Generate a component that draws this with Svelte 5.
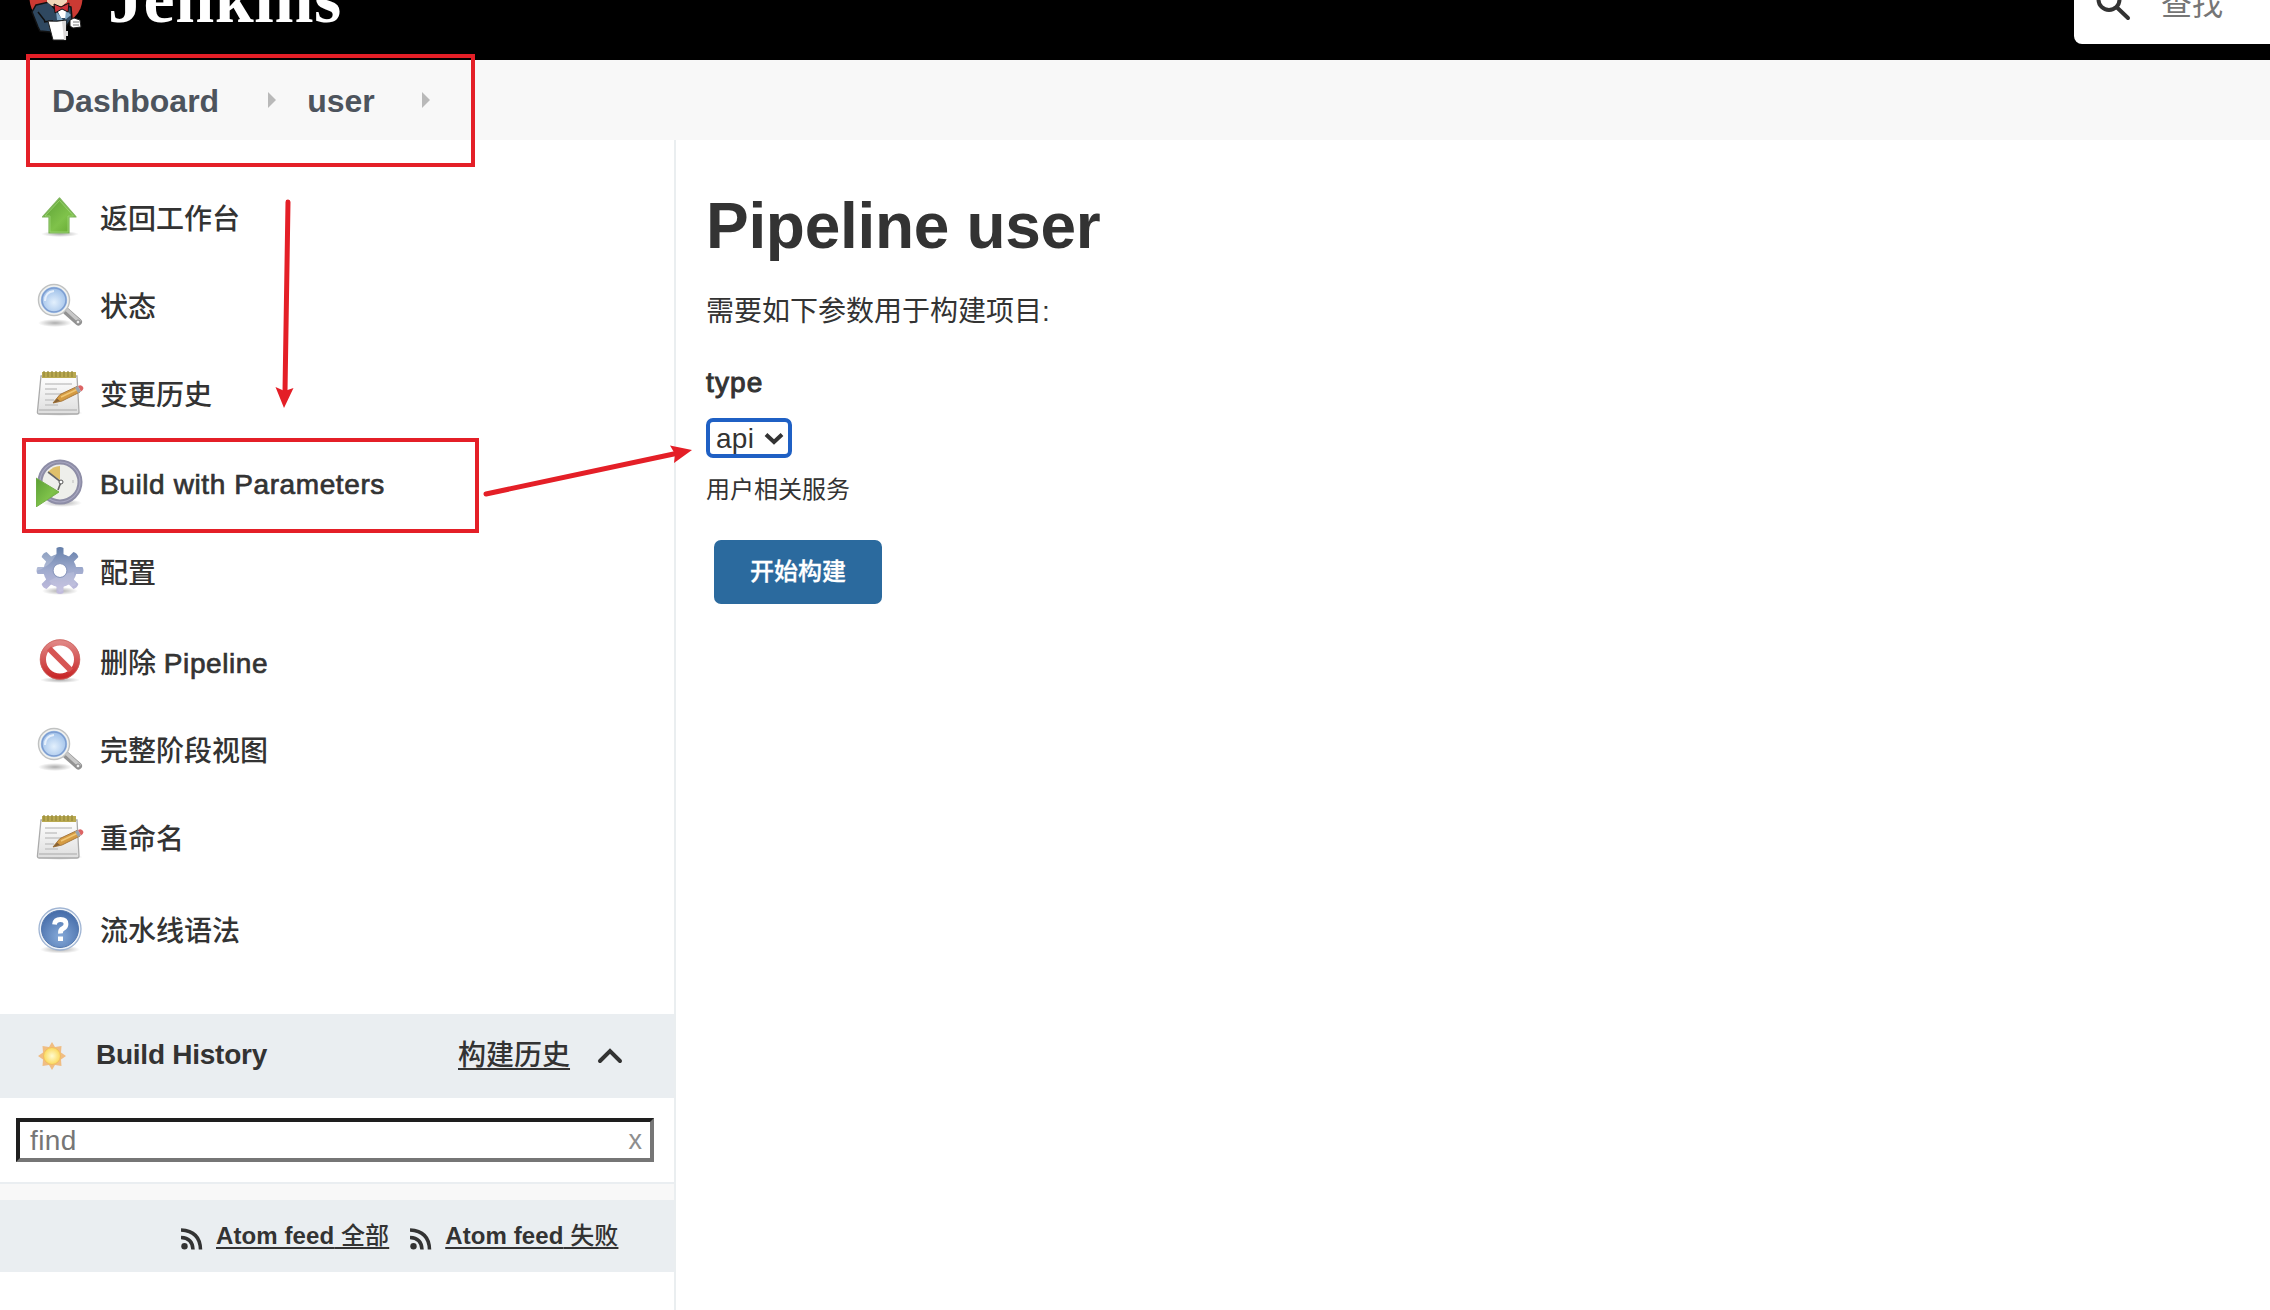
<script>
  const tasks = [
    { icon: 'up', label: '返回工作台' },
    { icon: 'search', label: '状态' },
    { icon: 'notepad', label: '变更历史' },
    { icon: 'clock', latin: 'Build with Parameters' },
    { icon: 'gear', label: '配置' },
    { icon: 'forbid', label: '删除 ', latin: 'Pipeline' },
    { icon: 'search', label: '完整阶段视图' },
    { icon: 'notepad', label: '重命名' },
    { icon: 'help', label: '流水线语法' }
  ];
  const crumbs = ['Dashboard', 'user'];
  const feeds = ['全部', '失败'];
  const teeth = [0, 45, 90, 135, 180, 225, 270, 315];
</script>

<svelte:head><title>user - Jenkins</title></svelte:head>

<!-- Shared gradients for the task icons -->
<svg class="defs" width="0" height="0" aria-hidden="true">
  <defs>
    <linearGradient id="green" x1="0" y1="0" x2="1" y2="1"><stop offset="0" stop-color="#5a9e35" /><stop offset=".6" stop-color="#7fc24a" /><stop offset="1" stop-color="#62a62e" /></linearGradient>
    <radialGradient id="lens" cx=".5" cy=".6" r=".6"><stop offset="0" stop-color="#e3f0fd" /><stop offset="1" stop-color="#9dbfe8" /></radialGradient>
    <linearGradient id="paper" x1="0" y1="0" x2="0" y2="1"><stop offset="0" stop-color="#fff" /><stop offset="1" stop-color="#dedede" /></linearGradient>
    <linearGradient id="metal" gradientUnits="userSpaceOnUse" x1="0" y1="0" x2="0" y2="47"><stop offset="0" stop-color="#637ea9" /><stop offset=".5" stop-color="#a0abce" /><stop offset="1" stop-color="#c3bcde" /></linearGradient>
    <linearGradient id="red" x1="0" y1="0" x2="0" y2="1"><stop offset="0" stop-color="#e08583" /><stop offset="1" stop-color="#c8292a" /></linearGradient>
    <radialGradient id="blue" cx=".5" cy=".7" r=".7"><stop offset="0" stop-color="#85a9d8" /><stop offset="1" stop-color="#446ba8" /></radialGradient>
    <radialGradient id="sun"><stop offset="0" stop-color="#fffbd0" /><stop offset="1" stop-color="#fbd95c" /></radialGradient>
    <radialGradient id="shade"><stop offset="0" stop-color="#000" stop-opacity=".32" /><stop offset="1" stop-color="#000" stop-opacity="0" /></radialGradient>
  </defs>
</svg>

{#snippet taskIcon(name)}
  <svg class="icon" viewBox="0 0 48 48">
    {#if name === 'up'}
      <ellipse cx="24" cy="41" rx="19" ry="3" fill="url(#shade)" />
      <path d="M23.500 5 40 24H33V40H13V24H6.500Z" fill="url(#green)" stroke="#7fb55c" stroke-width="1.200" stroke-linejoin="round" />
      <path d="M23.500 7.500 37.500 23H32V39H14V23H9Z" fill="none" stroke="#a0d777" stroke-width=".8" />
    {:else if name === 'search'}
      <ellipse cx="19" cy="42" rx="17" ry="4" fill="url(#shade)" />
      <path d="M30 30 42.500 41" stroke="#929292" stroke-width="7" stroke-linecap="round" />
      <path d="M31 29 43 40" stroke="#c8c8c8" stroke-width="3.500" stroke-linecap="round" />
      <circle cx="42" cy="41" r="2" fill="#eee" stroke="#888" />
      <circle cx="18" cy="19" r="15" fill="url(#lens)" stroke="#c0c2c2" stroke-width="2.500" />
      <circle cx="18" cy="19" r="14" fill="none" stroke="#f1f2f0" stroke-width="1.600" />
      <circle cx="18" cy="19" r="12" fill="url(#lens)" stroke="#7d9dd0" stroke-width="1.500" />
      <path d="M9 20Q9 11 18 10" fill="none" stroke="#e6f0fc" stroke-width="2" />
    {:else if name === 'notepad'}
      <ellipse cx="24" cy="44" rx="23" ry="3" fill="url(#shade)" />
      <path d="M5 7H41L43 43Q43 45 41 45H3Q1 45 1.500 42Z" fill="url(#paper)" stroke="#ababab" stroke-width="1.300" />
      <path d="M3 41H41" stroke="#bbb" stroke-width="1.500" />
      <path d="M6 3H40V9H6Z" fill="#b9a950" />
      <path d="M8 2V8M12 2V8M16 2V8M20 2V8M24 2V8M28 2V8M32 2V8M36 2V8" stroke="#95893a" stroke-width="1.200" />
      <path d="M9 15H36M9 20H21M9 25H29M9 31H18M9 36H22" stroke="#c6c6c6" stroke-width="1.500" />
      <path d="M17 34 24 25.500 41 17.500 44 23 26 32Z" fill="#d59b42" stroke="#a87a40" />
      <path d="M25 28 42 20" stroke="#f0c675" stroke-width="1.500" />
      <path d="M39 18.500 42 17 45 22.500 42 24Z" fill="#9aa3ae" />
      <path d="M42 17Q46 15 47.500 19 47 22 45 22.500Z" fill="#dc6464" />
      <path d="M17 34 21 29.500 24 32Z" fill="#866135" />
    {:else if name === 'clock'}
      <ellipse cx="26" cy="44" rx="20" ry="4" fill="url(#shade)" />
      <circle cx="24" cy="23" r="20" fill="#eeefeb" stroke="#8d8da6" stroke-width="5" />
      <circle cx="24" cy="23" r="20" fill="none" stroke="#a9a8c2" stroke-width="1.200" />
      <path d="M24 21 12 13Q17 7 24 7Z" fill="#dfc06a" />
      <path d="M12 13 25 23 22 31" fill="none" stroke="#666" stroke-width="1.600" />
      <circle cx="25" cy="23" r="2" fill="#fff" stroke="#555" />
      <path d="M37 21V24" stroke="#bbb" />
      <path d="M0 19 23 33 0 48Z" fill="url(#green)" stroke="#74ae4a" />
    {:else if name === 'gear'}
      <ellipse cx="24" cy="44" rx="18" ry="4" fill="url(#shade)" />
      <mask id="hub">
        <g fill="#fff">
          <circle cx="24" cy="23.500" r="16.500" />
          {#each teeth as angle}
            <path d="M19 12 20.500 7V1Q24-1 27.500 1V7L29 12Z" transform="rotate({angle} 24 23.500)" />
          {/each}
        </g>
        <circle cx="24" cy="23.500" r="6.500" fill="#000" />
      </mask>
      <g mask="url(#hub)">
        <rect width="48" height="48" fill="url(#metal)" />
        <path d="M0 24Q14 20 20 8L12 0H0Z" fill="#fff" opacity=".22" />
        <path d="M13 34Q25 27 38 25L40 38 24 45Z" fill="#fff" opacity=".13" />
      </g>
      <circle cx="24" cy="23.500" r="7" fill="none" stroke="#8b99bd" />
    {:else if name === 'forbid'}
      <ellipse cx="24" cy="43" rx="20" ry="3" fill="url(#shade)" />
      <circle cx="24" cy="22.500" r="17" fill="#fff" stroke="url(#red)" stroke-width="6" />
      <path d="M13 11.500 35 33.500" stroke="#d65553" stroke-width="6" />
      <circle cx="24" cy="22.500" r="19.800" fill="none" stroke="#cc6460" stroke-width=".8" />
    {:else}
      <ellipse cx="24" cy="44.500" rx="20" ry="4" fill="url(#shade)" />
      <circle cx="24" cy="24" r="21" fill="#edf2f8" stroke="#9fb4d3" stroke-width="1.300" />
      <circle cx="24" cy="24" r="18.500" fill="url(#blue)" stroke="#5478ae" />
      <path d="M18.500 19.500Q19 14.500 24.500 14.500T30 19Q30 22 27 23.500T24.500 28.500" fill="none" stroke="#fff" stroke-width="4.800" />
      <path d="M22 31.500H27V36H22Z" fill="#fff" />
    {/if}
  </svg>
{/snippet}

<div class="page">
  <header>
    <div class="brand">
      <svg class="mascot" width="56" height="42" viewBox="0 0 56 42">
        <circle cx="28" cy="-2" r="26.500" fill="#cb3a33" />
        <path d="M8 5 21 2 29 12 37 5 43 7 44 19 36 29 22 32 12 31 10 27 4 12Z" fill="#2f4860" stroke="#111" stroke-width="1.500" />
        <path d="M19-3H39V2L34 6H24L19 2Z" fill="#f0d6b7" />
        <path d="M28 8 38 6 38 18H33Z" fill="#fff" />
        <path d="M28 11 35 20H29ZM38 10 43 15 37 20Z" fill="#81a7c4" />
        <path d="M26 4 33 7 41 3 40 12 34 9 27 13Z" fill="#cf3238" stroke="#111" />
        <path d="M10 12 17 21M16 22Q21 21 25 21" stroke="#111" stroke-width="1.500" fill="none" />
        <path d="M20 21Q29 22 38 20L38 40 25 40Z" fill="#fff" stroke="#222" />
        <path d="M34 21H38V40H36Z" fill="#dcd9d8" />
        <path d="M42 20 46 18 52 20 53 27 45 28 42 26Z" fill="#fff" stroke="#222" />
        <path d="M45 22H51M45 25H51" stroke="#777" />
        <path d="M38 31H40V36H38Z" fill="#ddd" />
      </svg>
      <span class="wordmark">Jenkins</span>
    </div>
    <div class="searchbox">
      <svg width="36" height="44" viewBox="0 0 36 44"><circle cx="13" cy="-.500" r="10.500" /><path d="M21 7.500 32 18" /></svg>
      <span>查找</span>
    </div>
  </header>

  <nav class="crumbs">
    {#each crumbs as crumb}
      <span class="crumb">{crumb}</span><i class="sep"></i>
    {/each}
  </nav>

  <div class="body">
    <aside>
      <ul class="tasks">
        {#each tasks as task}
          <li>
            {@render taskIcon(task.icon)}
            <span class="label" class:plain={!task.label}>{task.label ?? ''}{#if task.latin}<span class="latin">{task.latin}</span>{/if}</span>
          </li>
        {/each}
      </ul>

      <div class="history">
        <svg class="sun" width="30" height="30" viewBox="0 0 30 30">
          <path d="M15 1 18 6 24.500 5 24 11.500 29 15 24 18.500 24.500 25 18 24 15 29 12 24 5.500 25 6 18.500 1 15 6 11.500 5.500 5 12 6Z" fill="#f0bd83" />
          <circle cx="15" cy="15" r="8.500" fill="url(#sun)" stroke="#f1bd62" />
        </svg>
        <b>Build History</b>
        <span class="trend">构建历史</span>
        <svg class="chevron" width="26" height="18" viewBox="0 0 26 18"><path d="M3 15 13 5 23 15" /></svg>
      </div>
      <div class="filter">
        <div class="find"><span>find</span><span class="clear">x</span></div>
      </div>
      <div class="strip"></div>
      <div class="feeds">
        {#each feeds as feed}
          <svg width="22" height="22" viewBox="0 0 22 22">
            <circle cx="3.500" cy="18.300" r="3.200" />
            <path d="M0 9.500Q11.500 10 12 21.500M0 2Q19 3 19.500 21.500" />
          </svg>
          <span class="feed"><b>Atom feed</b>{' ' + feed}</span>
        {/each}
      </div>
    </aside>

    <main>
      <h1>Pipeline user</h1>
      <p class="intro">需要如下参数用于构建项目:</p>
      <div class="param">type</div>
      <div class="select">
        <span>api</span>
        <svg width="20" height="13" viewBox="0 0 20 13"><path d="M2 2.500 10 10 18 2.500" /></svg>
      </div>
      <div class="hint">用户相关服务</div>
      <button>开始构建</button>
    </main>
  </div>

  <!-- Walkthrough annotations laid over the page -->
  <svg class="marks" width="2270" height="1310" viewBox="0 0 2270 1310">
    <rect x="28" y="56" width="445" height="109" />
    <rect x="24" y="440" width="453" height="91" />
    <path class="shaft" d="M288 202 285 392M486 494 676 453.500" />
    <path class="head" d="M284 408 275.500 387 284.500 391 293.500 388ZM692 450 670 445.500 675 454 674 463Z" />
  </svg>
</div>

<style>
  :global(body) { background: #fff; }
  .defs { position: absolute; }
  .page {
    position: relative;
    width: 2270px;
    height: 1310px;
    overflow: hidden;
    display: flex;
    flex-direction: column;
    color: #333;
    font: 28px 'Liberation Sans', 'Noto Sans CJK SC', sans-serif;
    white-space: nowrap;
  }
  svg { display: block; flex: none; }
  header {
    height: 60px;
    flex: none;
    background: #000;
    display: flex;
    justify-content: space-between;
    align-items: flex-start;
    overflow: hidden;
  }
  .brand { display: flex; padding-left: 28px; }
  .wordmark {
    margin: -41px 0 0 24px;
    color: #fff;
    font: bold 70px/80px 'Liberation Serif', serif;
    letter-spacing: .6px;
  }
  .searchbox {
    width: 174px;
    height: 44px;
    padding-left: 22px;
    display: flex;
    background: #fff;
    border-bottom-left-radius: 8px;
  }
  .searchbox svg { fill: none; stroke: #333; stroke-width: 4; stroke-linecap: round; }
  .searchbox span { margin: -19px 0 0 29px; font-size: 31px; line-height: 48px; color: #767676; }
  .crumbs {
    height: 80px;
    flex: none;
    display: flex;
    align-items: center;
    padding-left: 52px;
    background: #f8f8f8;
    color: #4d545d;
    font-size: 32px;
    font-weight: bold;
  }
  .crumb { line-height: 36px; margin-top: 2px; }
  .sep {
    border: solid transparent;
    border-width: 8px 0 8px 8px;
    border-left-color: #b9b9b9;
    margin: 0 31px 0 49px;
  }
  .sep:last-child { margin-left: 47px; }
  .body { flex: 1; display: flex; min-height: 0; }
  aside { width: 674px; flex: none; border-right: 2px solid #eaeef0; }
  .tasks { list-style: none; margin: 0; padding: 34px 0 0 36px; height: 840px; }
  .tasks li { height: 88px; display: flex; align-items: center; }
  .tasks li:nth-child(4), .tasks li:nth-child(6) { margin-top: 2px; }
  .tasks li:nth-child(9) { margin-top: 4px; }
  .label { margin: -3px 0 0 16px; font-weight: 500; }
  .label.plain { margin-top: 2px; }
  .latin { letter-spacing: .6px; -webkit-text-stroke: .7px #333; }
  .icon { width: 48px; height: 48px; margin-top: -3px; }
  .history {
    height: 84px;
    display: flex;
    align-items: center;
    padding-left: 37px;
    background: #eaeef1;
  }
  .history b { margin: -2px 0 0 29px; width: 362px; letter-spacing: -.25px; }
  .trend, .feed { text-decoration: underline; text-decoration-thickness: 2px; text-underline-offset: 3px; text-decoration-skip-ink: none; }
  .trend { margin-top: -7px; font-weight: 500; }
  .chevron { margin: -3px 0 0 27px; fill: none; stroke: #333; stroke-width: 4; stroke-linecap: round; }
  .filter { height: 84px; display: flex; align-items: center; padding-left: 16px; border-bottom: 2px solid #eaeef1; }
  .find {
    box-sizing: border-box;
    width: 638px;
    height: 44px;
    display: flex;
    align-items: center;
    justify-content: space-between;
    padding: 2px 8px 0 10px;
    border: 4px solid;
    border-color: #1e1e1e #767676 #767676 #1e1e1e;
    color: #767676;
    line-height: 32px;
  }
  .find span:first-child { letter-spacing: .4px; }
  .find .clear { margin-top: -2px; color: #8e8e8e; font-size: 27px; }
  .strip { height: 16px; background: #f8f8f8; }
  .feeds {
    height: 72px;
    display: flex;
    align-items: center;
    padding-left: 181px;
    background: #eaeef1;
    font-size: 24px;
  }
  .feeds svg { margin-top: 5px; fill: #333; }
  .feeds path { fill: none; stroke: #333; stroke-width: 3.5; }
  .feed { margin: -5px 21px 0 13px; font-weight: 500; letter-spacing: .1px; }
  main { padding: 50px 0 0 30px; display: flex; flex-direction: column; align-items: flex-start; }
  h1 { margin: 0; font-size: 64px; line-height: 72px; letter-spacing: -.3px; }
  .intro { margin: 30px 0 0; line-height: 40px; }
  .param { margin-top: 35px; line-height: 32px; letter-spacing: 1.1px; -webkit-text-stroke: 1px #333; }
  .select {
    box-sizing: border-box;
    width: 86px;
    height: 40px;
    margin-top: 19px;
    padding-left: 6px;
    display: flex;
    align-items: center;
    border: 4px solid #1f60c4;
    border-radius: 7px;
    line-height: 32px;
  }
  .select span { margin-top: 2px; letter-spacing: .3px; }
  .select svg { margin-left: 10px; fill: none; stroke: #333; stroke-width: 4; }
  .hint { margin-top: 14px; font-size: 24px; line-height: 36px; }
  button {
    width: 168px;
    height: 64px;
    margin: 32px 0 0 8px;
    padding: 0 0 5px;
    border: 0;
    border-radius: 7px;
    background: #2b6a9e;
    color: #fff;
    font: 500 24px 'Liberation Sans', 'Noto Sans CJK SC', sans-serif;
    -webkit-text-stroke: .3px #fff;
  }
  .marks { position: absolute; left: 0; top: 0; pointer-events: none; fill: none; stroke: #e41f27; stroke-width: 4; }
  .marks .shaft { stroke-width: 5; stroke-linecap: round; }
  .marks .head { fill: #e41f27; stroke: none; }
</style>
